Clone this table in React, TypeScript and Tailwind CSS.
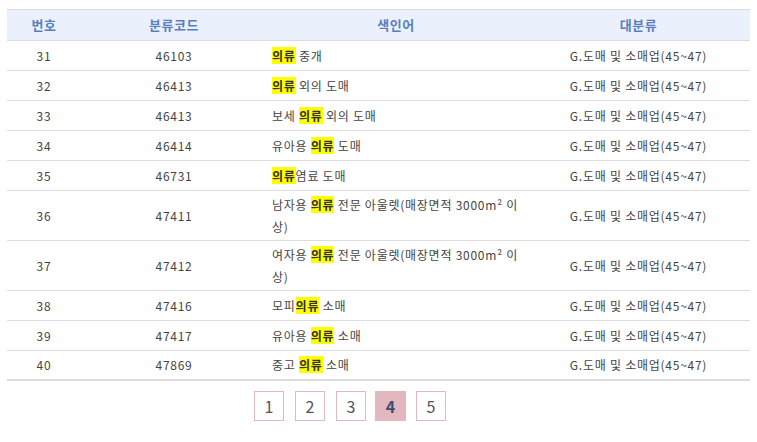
const rows: { no: number; code: string; pre: string; post: string; rest?: string }[] = [
  { no: 31, code: "46103", pre: "", post: " 중개" },
  { no: 32, code: "46413", pre: "", post: " 외의 도매" },
  { no: 33, code: "46413", pre: "보세 ", post: " 외의 도매" },
  { no: 34, code: "46414", pre: "유아용 ", post: " 도매" },
  { no: 35, code: "46731", pre: "", post: "염료 도매" },
  { no: 36, code: "47411", pre: "남자용 ", post: " 전문 아울렛(매장면적 3000m² 이", rest: "상)" },
  { no: 37, code: "47412", pre: "여자용 ", post: " 전문 아울렛(매장면적 3000m² 이", rest: "상)" },
  { no: 38, code: "47416", pre: "모피", post: " 소매" },
  { no: 39, code: "47417", pre: "유아용 ", post: " 소매" },
  { no: 40, code: "47869", pre: "중고 ", post: " 소매" },
];

const cols = "grid grid-cols-[74px_186px_258px_227px]";

export default function App() {
  return (
    <div
      className="w-[757px] h-[442px] bg-white pt-[9px] px-[7px] text-[12px] text-[#444]"
      style={{ fontFamily: '"Noto Sans CJK KR", "Noto Sans", sans-serif' }}
    >
      <div className="border-t border-[#dcdcdc]">
        <div className={`${cols} h-[31px] items-center bg-[#ebf1fc] border-b border-[#dcdcdc] font-bold text-[13px] text-[#5a7fbf] tracking-[0.5px]`}>
          <div className="text-center">번호</div>
          <div className="text-center">분류코드</div>
          <div className="text-center">색인어</div>
          <div className="text-center">대분류</div>
        </div>
        {rows.map((r, i) => (
          <div
            key={r.no}
            className={`${cols} items-center tracking-[0.75px] ${r.rest ? "h-[50px]" : "h-[30px]"} ${
              i === rows.length - 1 ? "border-b-2" : "border-b"
            } border-[#dcdcdc]`}
          >
            <div className="text-center">{r.no}</div>
            <div className="text-center">{r.code}</div>
            <div className="pl-[5px] pr-[2px] leading-[22px]">
              <div className="whitespace-nowrap">
                {r.pre}
                <span className="bg-[#ffff00] font-bold text-[#333]">의류</span>
                {r.post}
              </div>
              {r.rest && <div>{r.rest}</div>}
            </div>
            <div className="text-center">G.도매 및 소매업(45~47)</div>
          </div>
        ))}
      </div>
      <div className="flex gap-[11px] pl-[247px] pt-[10px]">
        {[1, 2, 3, 4, 5].map((n) =>
          n === 4 ? (
            <div
              key={n}
              className="w-[31px] h-[30px] -ml-[2px] -mr-[1px] flex items-center justify-center bg-[#e2b7be] text-[16px] font-bold text-[#3d4a6e]"
            >
              {n}
            </div>
          ) : (
            <div
              key={n}
              className="w-[30px] h-[30px] flex items-center justify-center border border-[#e2b7be] text-[16px] text-[#555]"
            >
              {n}
            </div>
          )
        )}
      </div>
    </div>
  );
}
